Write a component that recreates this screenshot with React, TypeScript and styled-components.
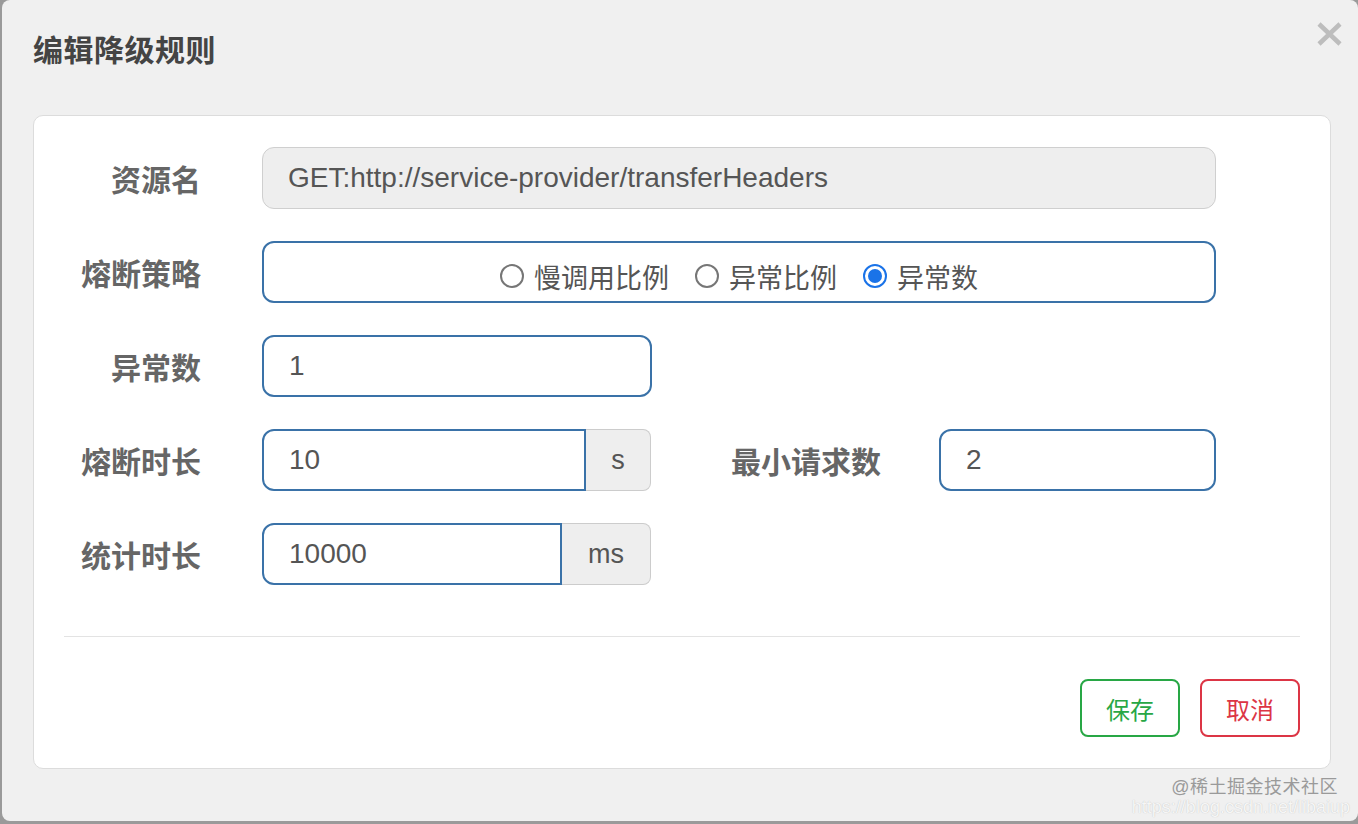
import React, { useState } from 'react';
import styled, { createGlobalStyle } from 'styled-components';

const GlobalStyle = createGlobalStyle`
  html, body {
    margin: 0;
    padding: 0;
    background: #9a9a9a;
    font-family: "Liberation Sans", Arial, "Noto Sans CJK SC", sans-serif;
  }
  * { box-sizing: border-box; }
`;

const Dialog = styled.div`
  position: relative;
  margin-left: 2px;
  width: 1356px;
  height: 821px;
  background: #f0f0f0;
  border-radius: 8px;
  padding: 0 27px 0 31px;
`;

const Header = styled.div`
  display: flex;
  align-items: center;
  justify-content: space-between;
  height: 115px;
  padding-bottom: 20px;
`;

const Title = styled.h4`
  margin: 0;
  font-size: 30px;
  font-weight: 700;
  color: #444;
  letter-spacing: 0.5px;
`;

const CloseButton = styled.button`
  border: none;
  background: none;
  padding: 0;
  margin-bottom: 28px;
  margin-right: -12px;
  cursor: pointer;
  display: flex;
`;

const Card = styled.div`
  background: #fff;
  border: 1.5px solid #dcdcdc;
  border-radius: 10px;
  padding: 31px 30px 31px 0;
`;

const FormRow = styled.div`
  display: flex;
  align-items: center;
  height: 62px;
  margin-bottom: 32px;
`;

const Label = styled.label<{ $width?: number }>`
  width: ${p => p.$width ?? 167}px;
  flex-shrink: 0;
  text-align: right;
  margin-right: ${p => (p.$width ? 58 : 61)}px;
  font-size: 30px;
  font-weight: 700;
  color: #666;
`;

const TextInput = styled.input<{ $width?: number; $disabled?: boolean }>`
  width: ${p => (p.$width ? `${p.$width}px` : '954px')};
  height: 62px;
  padding: 0 25px;
  font-family: inherit;
  font-size: 28px;
  color: #555;
  background: ${p => (p.$disabled ? '#eeeeee' : '#fff')};
  border: ${p => (p.$disabled ? '1.5px solid #cfcfcf' : '2px solid #3a72a8')};
  border-radius: 12px;
  outline: none;
`;

const Group = styled.div`
  display: flex;
  width: 389px;
  height: 62px;
`;

const GroupInput = styled.input`
  flex: 1;
  min-width: 0;
  height: 62px;
  padding: 0 25px;
  font-family: inherit;
  font-size: 28px;
  color: #555;
  border: 2px solid #3a72a8;
  border-radius: 12px 0 0 12px;
  outline: none;
`;

const Addon = styled.span<{ $width: number }>`
  width: ${p => p.$width}px;
  display: flex;
  align-items: center;
  justify-content: center;
  background: #eee;
  border: 1.5px solid #ccc;
  border-left: none;
  border-radius: 0 8px 8px 0;
  font-size: 27px;
  color: #555;
`;

const RadioBox = styled.div`
  width: 954px;
  height: 62px;
  display: flex;
  align-items: center;
  justify-content: center;
  gap: 26px;
  border: 2px solid #3a72a8;
  border-radius: 12px;
  padding-top: 8px;
`;

const RadioOption = styled.label`
  display: flex;
  align-items: center;
  gap: 10px;
  font-size: 27px;
  color: #555;
  cursor: pointer;
`;

const RadioDot = styled.span<{ $checked: boolean }>`
  width: 24px;
  height: 24px;
  border-radius: 50%;
  border: ${p => (p.$checked ? '2.5px solid #1a73e8' : '2px solid #767676')};
  display: flex;
  align-items: center;
  justify-content: center;
  &::after {
    content: '';
    width: 14px;
    height: 14px;
    border-radius: 50%;
    background: ${p => (p.$checked ? '#1a73e8' : 'transparent')};
  }
`;

const Divider = styled.hr`
  margin: 51px 0 42px 30px;
  border: none;
  border-top: 1.5px solid #e3e3e3;
`;

const Footer = styled.div`
  display: flex;
  justify-content: flex-end;
  gap: 20px;
`;

const OutlineButton = styled.button<{ $color: string }>`
  width: 100px;
  height: 58px;
  background: #fff;
  border: 2px solid ${p => p.$color};
  border-radius: 8px;
  color: ${p => p.$color};
  font-family: inherit;
  font-size: 24px;
  cursor: pointer;
`;

const Watermark = styled.div`
  position: absolute;
  right: 20px;
  bottom: 4px;
  text-align: right;
  line-height: 20px;
`;

const WatermarkMain = styled.div`
  font-size: 18px;
  color: #9a9a9a;
  letter-spacing: 0.5px;
`;

const WatermarkUrl = styled.div`
  font-size: 18px;
  color: #f6f6f6;
  text-shadow: 0 0 1px #bbb;
  margin-right: -12px;
`;

const strategies = ['慢调用比例', '异常比例', '异常数'];

export default function App() {
  const [strategy, setStrategy] = useState(2);

  return (
    <>
      <GlobalStyle />
      <Dialog>
        <Header>
          <Title>编辑降级规则</Title>
          <CloseButton aria-label="close">
            <svg width="27" height="26" viewBox="0 0 27 26">
              <path d="M3 3 L24 23 M24 3 L3 23" stroke="#bdbdbd" strokeWidth="4.5" />
            </svg>
          </CloseButton>
        </Header>

        <Card>
          <FormRow>
            <Label>资源名</Label>
            <TextInput $disabled readOnly value="GET:http://service-provider/transferHeaders" />
          </FormRow>

          <FormRow>
            <Label>熔断策略</Label>
            <RadioBox>
              {strategies.map((s, i) => (
                <RadioOption key={s} onClick={() => setStrategy(i)}>
                  <RadioDot $checked={strategy === i} />
                  {s}
                </RadioOption>
              ))}
            </RadioBox>
          </FormRow>

          <FormRow>
            <Label>异常数</Label>
            <TextInput $width={390} defaultValue="1" />
          </FormRow>

          <FormRow>
            <Label>熔断时长</Label>
            <Group>
              <GroupInput defaultValue="10" />
              <Addon $width={65}>s</Addon>
            </Group>
            <Label $width={230}>最小请求数</Label>
            <TextInput $width={277} defaultValue="2" />
          </FormRow>

          <FormRow>
            <Label>统计时长</Label>
            <Group>
              <GroupInput defaultValue="10000" />
              <Addon $width={89}>ms</Addon>
            </Group>
          </FormRow>

          <Divider />

          <Footer>
            <OutlineButton $color="#28a745">保存</OutlineButton>
            <OutlineButton $color="#dc3545">取消</OutlineButton>
          </Footer>
        </Card>

        <Watermark>
          <WatermarkMain>@稀土掘金技术社区</WatermarkMain>
          <WatermarkUrl>https://blog.csdn.net/libaiup</WatermarkUrl>
        </Watermark>
      </Dialog>
    </>
  );
}
